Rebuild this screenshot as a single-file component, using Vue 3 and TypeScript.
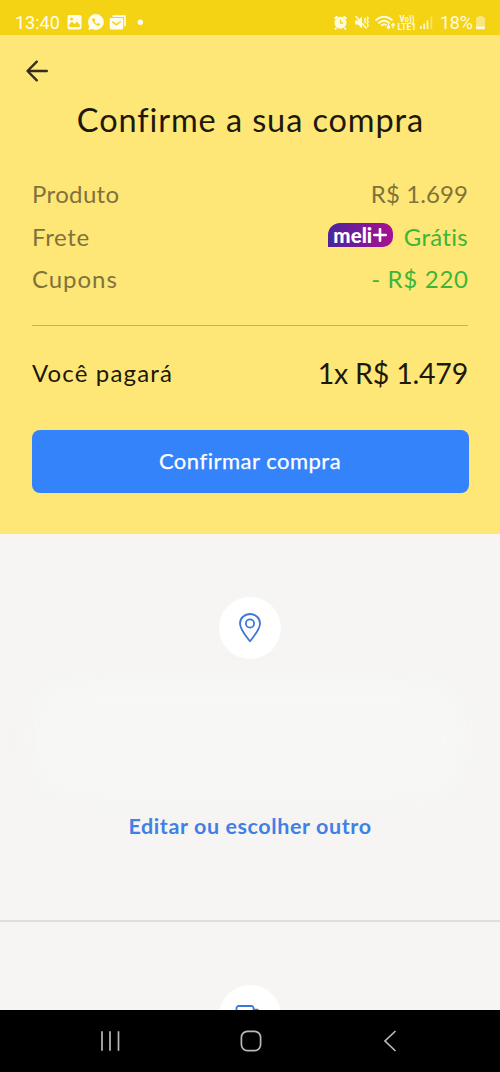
<script setup lang="ts">
interface SummaryRow {
  id: string
  label: string
  value: string
  tone: 'muted' | 'green'
  meli?: boolean
}

const rows: SummaryRow[] = [
  { id: 'product', label: 'Produto', value: 'R$ 1.699', tone: 'muted' },
  { id: 'shipping', label: 'Frete', value: 'Grátis', tone: 'green', meli: true },
  { id: 'coupons', label: 'Cupons', value: '- R$ 220', tone: 'green' },
]
</script>

<template>
  <div class="screen">
    <div class="status">
      <span class="clock">13:40</span>
      <svg class="notifications" width="80" height="20" viewBox="66 13 80 20">
        <path fill="#fffdf0" fill-rule="evenodd" d="M69.500 15h10a2 2 0 0 1 2 2v10.500a2 2 0 0 1-2 2h-10a2 2 0 0 1-2-2v-10.500a2 2 0 0 1 2-2zM69.200 27h10.600v-2.200l-2.600-3-2.700 2.300-2.500-2.600-2.800 2.800zM71.600 17.400a1.500 1.500 0 1 0 .01 0z" />
        <circle cx="95.900" cy="22" r="7.900" fill="#fffdf0" />
        <path d="M88.300 29.900l1.300-4.800 3.600 3.600z" fill="#fffdf0" />
        <path d="M92.700 18.200q-1.400 1.700.9 4.500t5 3.200q1.400-.4 1.600-1.900l-2.100-1.100-1.100 1.100q-1.800-.8-2.600-2.700l.9-1-.9-2.100z" fill="#f4d31a" />
        <path d="M112.500 16.200h12.500v10" fill="none" stroke="#fffdf0" stroke-width="1.700" />
        <rect x="109.700" y="18" width="13.500" height="11.500" rx="1.400" fill="#fffdf0" />
        <path d="M112 21.500l4.400 3.200 4.400-3.200" fill="none" stroke="#f4d31a" stroke-width="1.500" />
        <circle cx="140.300" cy="22.300" r="2.700" fill="#fffdf0" />
      </svg>
      <svg class="signals" width="105" height="20" viewBox="332 13 105 20">
        <g fill="none" stroke="#fffbe2">
          <path d="M334.500 18.800l3-2.600M346.500 18.800l-3-2.600M336.500 27.800l-1.500 1.500M344.500 27.800l1.500 1.500" stroke-width="1.800" />
          <circle cx="340.500" cy="22.800" r="6" fill="#fffbe2" stroke="none" />
          <path d="M340.500 19.800v3.200h2.600" stroke="#f4d31a" stroke-width="1.300" />
          <path d="M355 20.500h3l4-4v12l-4-4h-3z" fill="#fffbe2" stroke="none" />
          <path d="M355.500 16l11 12.500" stroke-width="1.500" />
          <path d="M364.500 17.500l1 1.500-1 1.500 1 1.500-1 1.500M367.200 16.500l1 1.800-1 1.800 1 1.800-1 1.800 1 1.800-1 1.800" stroke-width="1.300" />
          <path d="M375.500 20.500q8.500-7.500 17 0M378.300 23.200q5.700-5 11.400 0M381 25.700q3-2.300 5.500-.5" stroke-width="1.800" />
          <path d="M388.500 23.500v5M386.800 26.500l1.700 2 1.700-2M393 28.500v-5M391.300 25.500l1.700-2 1.700 2" stroke-width="1.200" />
        </g>
        <g fill="#fffbe2" font-family="Roboto, sans-serif" font-weight="700">
          <text x="399.500" y="21.700" font-size="8.500" textLength="15" lengthAdjust="spacingAndGlyphs">Vo))</text>
          <text x="397.500" y="29.500" font-size="9" textLength="18.500" lengthAdjust="spacingAndGlyphs">LTE1</text>
        </g>
        <g fill="#fff7c9">
          <rect x="420" y="26" width="1.700" height="3" />
          <rect x="423.300" y="23.500" width="1.700" height="5.500" />
          <rect x="426.600" y="20.500" width="1.700" height="8.500" />
          <rect x="430.500" y="16.500" width="1.800" height="12.500" opacity=".45" />
        </g>
      </svg>
      <span class="percent">18%</span>
      <svg class="battery" width="11" height="16" viewBox="0 0 11 16">
        <path d="M3.500 2v-1h4v1h1a1.500 1.500 0 0 1 1.500 1.500v9h-9v-9a1.500 1.500 0 0 1 1.500-1.500z" fill="#fbe57d" />
        <path d="M1 11.500h9v1.700a1 1 0 0 1-1 1h-7a1 1 0 0 1-1-1z" fill="#fffbe2" />
      </svg>
    </div>

    <section class="checkout">
      <svg class="back" width="24" height="24" viewBox="0 0 24 24" aria-label="Voltar">
        <path d="M11.800 2.700L2.500 12l9.300 9.300M2.800 12h19" />
      </svg>
      <h1>Confirme a sua compra</h1>
      <div class="summary">
        <div v-for="row in rows" :key="row.id" class="row" :class="row.id">
          <span class="label">{{ row.label }}</span>
          <span class="amount">
            <span v-if="row.meli" class="meli">meli<svg width="14" height="14" viewBox="0 0 14 14"><path d="M7 1.200v11.600M1.200 7h11.600" /></svg></span>
            <span class="value" :class="row.tone">{{ row.value }}</span>
          </span>
        </div>
      </div>
      <div class="total">
        <span class="total-label">Você pagará</span>
        <span class="total-value">1x R$ 1.479</span>
      </div>
      <button type="button" class="confirm">Confirmar compra</button>
    </section>

    <section class="address">
      <div class="bubble">
        <svg width="24" height="32" viewBox="0 0 24 32">
          <path d="M12 29.300C7.500 23.200 2 17.500 2 11.400a10 9.400 0 0 1 20 0C22 17.500 16.500 23.200 12 29.300z" />
          <circle cx="12" cy="11.500" r="4.100" />
        </svg>
      </div>
      <div class="address-text"></div>
      <a class="edit">Editar ou escolher outro</a>
    </section>

    <section class="delivery">
      <div class="bubble">
        <svg width="30" height="22" viewBox="0 0 30 22">
          <path d="M1.500 17V3.500a2.300 2.300 0 0 1 2.300-2.500h12.500a2.300 2.300 0 0 1 2.300 2.500V17zM18.600 4.700h4l4 5V17h-8" />
        </svg>
      </div>
    </section>

    <nav class="navbar">
      <svg width="24" height="24" viewBox="0 0 24 24"><path d="M3 2.200v19.600M11 2.200v19.600M19.500 2.200v19.600" /></svg>
      <svg width="24" height="24" viewBox="0 0 24 24"><rect x="2.400" y="2.400" width="19.200" height="19.200" rx="6" /></svg>
      <svg width="24" height="24" viewBox="0 0 24 24"><path d="M17.500 2L7 12l10.500 10" /></svg>
    </nav>
  </div>
</template>

<style>
body {
  margin: 0;
}
</style>

<style scoped>
.screen {
  display: flex;
  flex-direction: column;
  width: 500px;
  height: 1072px;
  overflow: hidden;
  background: #f6f5f4;
  font-family: Lato, 'Open Sans', sans-serif;
  font-variant-ligatures: none;
}
.status {
  display: flex;
  align-items: center;
  flex: none;
  height: 35px;
  box-sizing: border-box;
  padding: 10px 14px 0 15px;
  background: #f4d314;
  color: #fffdf0;
  font-family: Roboto, sans-serif;
  font-size: 18px;
  line-height: 25px;
}
.clock {
  width: 51px;
}
.signals {
  margin-left: auto;
}
.percent {
  width: 35px;
  margin-left: 3px;
  color: #fffbe2;
  letter-spacing: -0.3px;
}
.checkout {
  flex: none;
  height: 499px;
  box-sizing: border-box;
  padding: 24px 32px 0;
  background: #fee777;
}
.back {
  display: block;
  margin-left: -7px;
  fill: none;
  stroke: #332e22;
  stroke-width: 2.4;
  stroke-linecap: round;
  stroke-linejoin: round;
}
h1 {
  margin: 17px -1px 0 0;
  font-size: 32.5px;
  line-height: 40px;
  font-weight: 400;
  letter-spacing: 0.9px;
  text-align: center;
  white-space: nowrap;
  color: #1c190c;
}
.summary {
  margin-top: 33px;
  padding-bottom: 24px;
  border-bottom: 1px solid #c4b35f;
}
.row {
  display: flex;
  justify-content: space-between;
  height: 42.5px;
  font-size: 24px;
  line-height: 42.5px;
  color: #7f733b;
}
.product .label {
  letter-spacing: 0.35px;
}
.product .value {
  letter-spacing: 0.1px;
}
.shipping .label {
  letter-spacing: 0.65px;
}
.shipping .value {
  letter-spacing: 0.3px;
}
.coupons .label {
  letter-spacing: 0.95px;
}
.coupons .value {
  margin-right: -0.7px;
  letter-spacing: 0.7px;
}
.amount {
  display: flex;
  align-items: center;
}
.green {
  color: #3db53a;
}
.meli {
  display: flex;
  align-items: center;
  justify-content: center;
  gap: 1px;
  width: 65px;
  height: 24px;
  margin: -3px 11px 0 0;
  border-radius: 12px 10px 10px 0;
  background: linear-gradient(90deg, #4a259c, #a90f91);
  color: #fff;
  font-size: 20.5px;
  line-height: 23px;
  font-weight: 900;
}
.meli svg {
  fill: none;
  stroke: #fff;
  stroke-width: 2.6;
  stroke-linecap: round;
}
.total {
  display: flex;
  justify-content: space-between;
  margin-top: 26px;
  height: 42px;
  line-height: 42px;
  color: #1c190c;
}
.total-label {
  font-size: 24px;
  letter-spacing: 1.15px;
}
.total-value {
  font-size: 28.5px;
  letter-spacing: -0.2px;
}
.confirm {
  display: block;
  width: 437px;
  height: 63px;
  margin: 36px 0 0 -0.5px;
  padding: 0;
  border: 0;
  border-radius: 8px;
  background: #3483fa;
  color: #fff;
  font: 400 22px/61px Lato, sans-serif;
  letter-spacing: 0.5px;
  padding-bottom: 2px;
  -webkit-text-stroke: 0.25px #fff;
}
.address {
  display: flex;
  flex-direction: column;
  align-items: center;
  flex: none;
  height: 388px;
  box-sizing: border-box;
  padding-top: 63px;
  border-bottom: 2px solid #dfdedd;
}
.bubble {
  display: flex;
  align-items: center;
  justify-content: center;
  flex: none;
  width: 62px;
  height: 62px;
  border-radius: 50%;
  background: #fff;
}
.bubble svg {
  fill: none;
  stroke: #3d76d9;
  stroke-width: 1.8;
  stroke-linejoin: round;
}
.address-text {
  width: 430px;
  height: 120px;
  margin-top: 20px;
  border-radius: 40px;
  background: #f7f7f6;
  filter: blur(12px);
}
.edit {
  margin-top: 10px;
  font-size: 21.5px;
  line-height: 34px;
  font-weight: 700;
  letter-spacing: 0.6px;
  color: #3f80e7;
}
.delivery {
  display: flex;
  justify-content: center;
  flex: 1;
  min-height: 0;
  padding-top: 63px;
  overflow: hidden;
}
.navbar {
  display: flex;
  align-items: center;
  justify-content: space-between;
  flex: none;
  height: 62.500px;
  box-sizing: border-box;
  padding: 0 98px 0 99px;
  background: #000;
}
.navbar svg {
  fill: none;
  stroke: #b9b9b9;
  stroke-width: 1.7;
}
</style>
